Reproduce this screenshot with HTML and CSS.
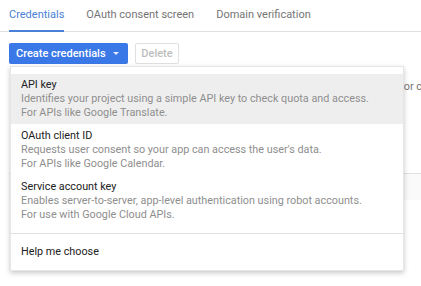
FILE: index.html
```html
<!DOCTYPE html>
<html lang="en">
<head>
    <meta charset="UTF-8">
    <meta name="viewport" content="width=device-width, initial-scale=1.0">
    <title>Credentials</title>
    <link rel="stylesheet" href="styles.css">
</head>
<body>
<div class="tabs">
    <div class="tab active">Credentials</div>
    <div class="tab">OAuth consent screen</div>
    <div class="tab">Domain verification</div>
</div>

<div class="toolbar">
    <button class="btn-primary">Create credentials <span class="caret"></span></button>
    <button class="btn-disabled">Delete</button>

    <div class="menu">
        <div class="menu-item hover">
            <div class="item-title">API key</div>
            <div class="item-desc">Identifies your project using a simple API key to check quota and access.</div>
            <div class="item-desc">For APIs like Google Translate.</div>
        </div>
        <div class="menu-item">
            <div class="item-title">OAuth client ID</div>
            <div class="item-desc">Requests user consent so your app can access the user's data.</div>
            <div class="item-desc">For APIs like Google Calendar.</div>
        </div>
        <div class="menu-item">
            <div class="item-title">Service account key</div>
            <div class="item-desc">Enables server-to-server, app-level authentication using robot accounts.</div>
            <div class="item-desc">For use with Google Cloud APIs.</div>
        </div>
        <div class="menu-help">Help me choose</div>
    </div>
</div>

<div class="note">for c</div>
<div class="table-head"></div>
</body>
</html>
```

FILE: styles.css
```css
body {
    margin: 0;
    background: #fff;
    font-family: Roboto, Arial, sans-serif;
    color: #212121;
    width: 421px;
    height: 286px;
    overflow: hidden;
}

.tabs {
    display: flex;
    gap: 22px;
    padding-left: 9px;
    border-bottom: 1px solid #e0e0e0;
    height: 31px;
}

.tab {
    font-size: 11px;
    color: #757575;
    box-sizing: border-box;
    height: 32px;
    padding-top: 1px;
    line-height: 28px;
}

.tab.active {
    color: #4a7fd8;
    border-bottom: 2px solid #4a7fd8;
}

.toolbar {
    position: relative;
    display: flex;
    gap: 7px;
    padding: 11px 0 0 9px;
}

.toolbar button {
    font-family: Roboto, Arial, sans-serif;
    font-size: 11px;
    font-weight: 500;
    height: 21px;
    border-radius: 2px;
    padding: 0;
    margin: 0;
}

.btn-primary {
    width: 119px;
    background: #3b78e7;
    color: #fff;
    border: none;
    display: flex;
    align-items: center;
    padding-left: 7px !important;
    gap: 7px;
}

.caret {
    width: 0;
    height: 0;
    border-left: 3px solid transparent;
    border-right: 3px solid transparent;
    border-top: 3px solid #e3ecfc;
}

.btn-disabled {
    width: 44px;
    background: #fff;
    color: #bdbdbd;
    border: 1px solid #e0e0e0;
}

.menu {
    position: absolute;
    top: 34px;
    left: 10px;
    width: 394px;
    background: #fff;
    border: 1px solid #e6e6e6;
    box-sizing: border-box;
    box-shadow: 0 2px 5px rgba(0, 0, 0, 0.22);
    padding-top: 7px;
    z-index: 2;
}

.menu-item {
    padding: 4px 10px;
    font-size: 10.8px;
    line-height: 14px;
    margin-bottom: 1px;
}

.menu-item.hover {
    background: #eeeeee;
}

.item-title {
    color: #212121;
}

.item-desc {
    color: #8e8e8e;
}

.menu-help {
    margin-top: 7px;
    border-top: 1px solid #e0e0e0;
    padding: 11px 10px 11px 10px;
    font-size: 10.8px;
    line-height: 14px;
}

.note {
    margin-top: 16px;
    padding-left: 400px;
    white-space: nowrap;
    font-size: 10.8px;
    color: #757575;
}

.table-head {
    margin: 80px 0 0 9px;
    height: 26px;
    border-top: 1px solid #e0e0e0;
    background: #fafafa;
}
```
